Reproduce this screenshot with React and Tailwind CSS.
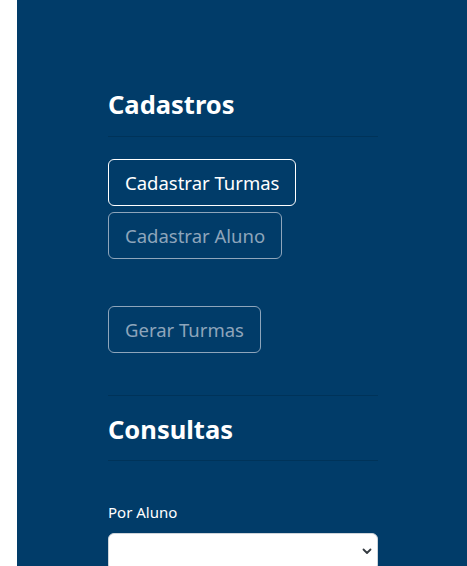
export default function App() {
  const font = { fontFamily: '"Noto Sans", "Open Sans", sans-serif' };
  return (
    <div className="flex min-h-[566px] w-full bg-white" style={font}>
      <div className="w-[17px] shrink-0 bg-white" />
      <div className="flex-1 bg-[#013c69] pl-[91px] pt-[87px] pb-10">
        <div className="w-[270px]">
          <h3 className="text-[25.5px] font-bold leading-[34px] text-white">Cadastros</h3>
          <div className="mt-[15px] border-t border-black/15" />

          <div className="mt-[22px] flex flex-col items-start gap-[6px]">
            <button className="h-[47px] rounded-md border border-white px-4 text-[18.5px] text-white">
              Cadastrar Turmas
            </button>
            <button className="h-[47px] rounded-md border border-[#8ea5bb] px-4 text-[18.5px] text-[#8ea5bb]">
              Cadastrar Aluno
            </button>
            <button className="mt-[41px] h-[47px] rounded-md border border-[#8ea5bb] px-4 text-[18.5px] text-[#8ea5bb]">
              Gerar Turmas
            </button>
          </div>

          <div className="mt-[42px] border-t border-black/15" />
          <h3 className="mt-[16px] text-[25.5px] font-bold leading-[34px] text-white">Consultas</h3>
          <div className="mt-[14px] border-t border-black/15" />

          <label className="mt-[41px] block text-[15px] leading-[20px] text-white">Por Aluno</label>
          <div className="relative mt-[11px] h-[38px] rounded-md border border-[#ced4da] bg-white">
            <svg
              className="absolute right-[5px] top-[14px]"
              width="10"
              height="7"
              viewBox="0 0 10 7"
              fill="none"
              stroke="#343a40"
              strokeWidth="1.8"
              strokeLinecap="round"
              strokeLinejoin="round"
            >
              <path d="M1.5 1.5 L5 5 L8.5 1.5" />
            </svg>
          </div>
        </div>
      </div>
    </div>
  );
}
